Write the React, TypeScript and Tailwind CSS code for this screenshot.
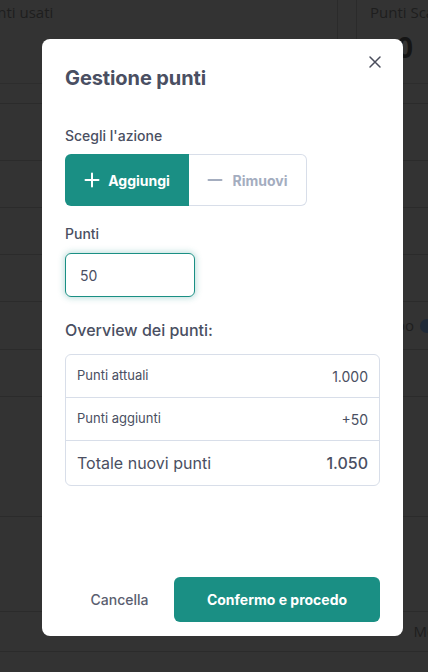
import React from "react";

const font = { fontFamily: "Inter, 'Noto Sans', sans-serif" };

function BgRow({ h, children }: { h: number; children?: React.ReactNode }) {
  return (
    <div className="border-b border-[#2b2b2b] flex items-center" style={{ height: h }}>
      {children}
    </div>
  );
}

export default function App() {
  return (
    <div className="relative w-[428px] h-[672px] overflow-hidden bg-[#333333]" style={font}>
      {/* dimmed background page */}
      <div className="flex flex-col" style={{ fontFamily: "'Open Sans', sans-serif" }}>
        <div className="h-[84px] flex border-b border-[#2d2d2d]">
          <div className="flex-1 pt-[1px] text-[15px] text-[#1e1e1e] -ml-[21px]">Punti usati</div>
          <div className="w-[20px] border-l border-r border-[#2b2b2b]" />
          <div className="w-[71px] pl-[13px] pt-[1px] text-[15px] text-[#1e1e1e] whitespace-nowrap">
            Punti Scalati
            <div className="text-[28px] font-bold leading-[30px] mt-[8px] ml-[27px] text-[#151515]">0</div>
          </div>
        </div>
        <BgRow h={20} />
        <BgRow h={57} />
        <BgRow h={47} />
        <BgRow h={47} />
        <BgRow h={47} />
        <BgRow h={48}>
          <div className="ml-auto mr-0 flex items-center gap-[6px] text-[15px] text-[#1e1e1e] translate-x-[6px]">
            <span>Gruppo</span>
            <span className="w-[14px] h-[14px] rounded-full bg-[#202a38]" />
          </div>
        </BgRow>
        <BgRow h={47} />
        <BgRow h={120} />
        <BgRow h={95} />
        <BgRow h={40}>
          <div className="ml-auto text-[15px] text-[#1e1e1e] translate-x-[8px]">Mo</div>
        </BgRow>
      </div>

      {/* modal */}
      <div className="absolute left-[42px] top-[39px] w-[361px] h-[597px] bg-white rounded-[8px] flex flex-col px-[23px] pt-[25px] pb-[14px]">
        <button className="absolute right-[20px] top-[15px] w-[16px] h-[16px] flex items-center justify-center text-[#4a4d5c]">
          <svg width="14" height="14" viewBox="0 0 14 14" fill="none" stroke="currentColor" strokeWidth="1.5" strokeLinecap="round">
            <path d="M2 2L12 12M12 2L2 12" />
          </svg>
        </button>
        <h2 className="text-[20px] leading-[28px] font-bold text-[#4a4f62] tracking-[-0.1px]">Gestione punti</h2>

        <div className="mt-[34px] text-[14px] leading-[20px] text-[#4a4f62] font-medium">Scegli l'azione</div>
        <div className="mt-[8px] flex w-[242px] h-[52px]">
          <button className="w-[124px] h-full bg-[#1a8f84] rounded-l-[6px] flex items-center justify-center gap-[8px] text-white text-[14px] font-bold">
            <svg width="16" height="16" viewBox="0 0 16 16" fill="none" stroke="currentColor" strokeWidth="2" strokeLinecap="round">
              <path d="M8 1.5V14.5M1.5 8H14.5" />
            </svg>
            Aggiungi
          </button>
          <button className="flex-1 h-full border border-l-0 border-[#d8dee9] rounded-r-[6px] flex items-center justify-center gap-[9px] text-[#a4adbf] text-[14px] font-bold">
            <svg width="16" height="16" viewBox="0 0 16 16" fill="none" stroke="currentColor" strokeWidth="2" strokeLinecap="round">
              <path d="M1.5 8H14.5" />
            </svg>
            Rimuovi
          </button>
        </div>

        <div className="mt-[18px] text-[14px] leading-[20px] text-[#4a4f62] font-medium">Punti</div>
        <div className="mt-[9px] w-[130px] h-[44px] rounded-[6px] border border-[#1a8f84] shadow-[0_0_6px_1px_rgba(26,143,132,0.3)] flex items-center px-[14px] text-[14px] text-[#4a4f62]">
          50
        </div>

        <div className="mt-[21px] text-[16px] leading-[24px] text-[#4a4f62] font-medium">Overview dei punti:</div>
        <div className="mt-[12px] border border-[#d8dee9] rounded-[6px] flex flex-col">
          <div className="h-[43px] flex items-center justify-between px-[11px] border-b border-[#d8dee9] text-[13px] text-[#4a4f62]">
            <span>Punti attuali</span>
            <span className="text-[14px]">1.000</span>
          </div>
          <div className="h-[43px] flex items-center justify-between px-[11px] border-b border-[#d8dee9] text-[13px] text-[#4a4f62]">
            <span>Punti aggiunti</span>
            <span className="text-[14px]">+50</span>
          </div>
          <div className="h-[44px] flex items-center justify-between px-[11px] text-[16px] text-[#4a4f62]">
            <span>Totale nuovi punti</span>
            <span className="font-medium">1.050</span>
          </div>
        </div>

        <div className="flex-1" />
        <div className="flex items-center">
          <button className="w-[109px] h-[45px] text-[14px] font-medium text-[#5a5e6f] flex items-center justify-center">
            Cancella
          </button>
          <button className="flex-1 h-[45px] rounded-[6px] bg-[#1a8f84] text-white text-[14px] font-bold flex items-center justify-center">
            Confermo e procedo
          </button>
        </div>
      </div>
    </div>
  );
}
